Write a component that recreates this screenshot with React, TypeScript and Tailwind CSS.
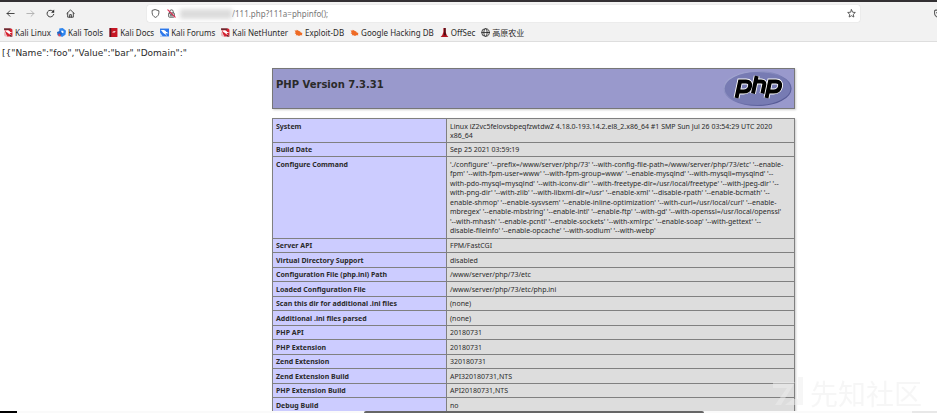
import React from "react";

type IconProps = { className?: string };

const stroke = {
  fill: "none",
  stroke: "currentColor",
  strokeWidth: 1.5,
  strokeLinecap: "round" as const,
  strokeLinejoin: "round" as const,
};

function BackIcon({ className }: IconProps) {
  return (
    <svg viewBox="0 0 16 16" className={className} {...stroke} aria-hidden="true">
      <path d="M14.500 8H2M7 3L2 8l5 5" />
    </svg>
  );
}

function ForwardIcon({ className }: IconProps) {
  return (
    <svg viewBox="0 0 16 16" className={className} {...stroke} aria-hidden="true">
      <path d="M1.500 8H14M9 3l5 5-5 5" />
    </svg>
  );
}

function ReloadIcon({ className }: IconProps) {
  return (
    <svg viewBox="0 0 16 16" className={className} {...stroke} strokeWidth={1.6} aria-hidden="true">
      <path d="M13.800 9.500A6 6 0 1 1 12 3.700" />
      <path d="M14.500 1v5.500H9z" fill="currentColor" stroke="none" />
    </svg>
  );
}

function HomeIcon({ className }: IconProps) {
  return (
    <svg viewBox="0 0 16 16" className={className} {...stroke} strokeWidth={1.5} aria-hidden="true">
      <path d="M1.500 8L8 1.500 14.500 8M3 7v7.500h10V7M6.500 14.500V10h3v4.500" />
    </svg>
  );
}

function ShieldIcon({ className }: IconProps) {
  return (
    <svg viewBox="0 0 16 16" className={className} {...stroke} strokeWidth={1.7} aria-hidden="true">
      <path d="M8 1.200l6 2v3.300c0 4-2.500 7-6 8.500-3.500-1.500-6-4.500-6-8.500V3.200z" />
    </svg>
  );
}

function InsecureIcon({ className }: IconProps) {
  return (
    <svg viewBox="0 0 16 16" className={className} {...stroke} strokeWidth={1.7} aria-hidden="true">
      <path d="M5 7V4.500a3 3 0 0 1 6 0V7" />
      <rect x="3" y="7" width="10" height="7.500" rx="1" />
      <path d="M6 9.500h4M6 12h4" />
      <path d="M1.500 1.500l13 13" stroke="#e22850" strokeWidth={2} />
    </svg>
  );
}

function StarIcon({ className }: IconProps) {
  return (
    <svg viewBox="0 0 16 16" className={className} {...stroke} aria-hidden="true">
      <path d="M8 1.300l2 4.400 4.800.5-3.600 3.200 1 4.900L8 11.900l-4.200 2.400 1-4.900L1.200 6.200 6 5.700z" />
    </svg>
  );
}

function PocketIcon({ className }: IconProps) {
  return (
    <svg viewBox="0 0 16 16" className={className} {...stroke} strokeWidth={1.8} aria-hidden="true">
      <path d="M3 2h10a2 2 0 0 1 2 2v3.500a7 7 0 0 1-14 0V4a2 2 0 0 1 2-2z" />
      <path d="M4.700 6.500L8 9.500l3.300-3" />
    </svg>
  );
}

function DragonIcon() {
  return (
    <svg viewBox="0 0 16 16" className="size-[9px] shrink-0" aria-hidden="true">
      <path d="M0 1h13l2 2v12H5z" fill="#d5202e" />
      <path d="M0 1h12l-2 2H0z" fill="#4a2a30" />
      <path d="M1 5c4-2 9-1 10 2 2 0 3 0 4 2-3-1-4 0-5 1 2 1 3 2 4 4-3-2-5-3-7-5-2-1-3-3-6-4z" fill="#fff" />
      <path d="M0 6l6 8-4 1-2-2z" fill="#e9b9bd" />
      <path d="M10 11l5 4h-4z" fill="#4a2a30" />
    </svg>
  );
}

function ForumsIcon() {
  return (
    <svg viewBox="0 0 16 16" className="size-[9px] shrink-0" aria-hidden="true">
      <rect x="0" y="1" width="16" height="14" fill="#2d78ea" />
      <path d="M1 4c5-1 9 0 10 3 2 0 3 1 4 3-3-1-4-1-5 0 1 1 2 2 3 5-3-4-5-4-7-6C4 7 4 5 1 4z" fill="#fff" />
      <path d="M0 8l5 7H0z" fill="#cfe0fa" />
    </svg>
  );
}

function ToolsIcon() {
  return (
    <svg viewBox="0 0 16 16" className="size-[9px] shrink-0" aria-hidden="true">
      <path d="M4 1l6-1 6 5-1 7-6 4-5-3z" fill="#2f86ee" />
      <path d="M0 7l6-2 3 5-3 5-5-2z" fill="#1c66cc" />
      <path d="M7 5l4 0 1 3-3 1z" fill="#fff" />
      <path d="M2 10l3 0 2 4-4 1z" fill="#e04a52" />
    </svg>
  );
}

function DocsIcon() {
  return (
    <svg viewBox="0 0 16 16" className="size-[9px] shrink-0" aria-hidden="true">
      <rect x="1" y="0" width="14" height="16" rx="1" fill="#c71624" />
      <path d="M1 0h3v16H1z" fill="#5b1420" />
      <path d="M6 7c2-2 4-1 6-1l-2 2H6z" fill="#fff" />
    </svg>
  );
}

function ExploitIcon() {
  return (
    <svg viewBox="0 0 16 16" className="size-[9px] shrink-0" aria-hidden="true">
      <path d="M1 4l3 1 1-2 3 2 3 1 1 2 3 1-1 2 1 2-4 0-2 1-3-1-3 0 1-2-3-2 2-1z" fill="#ee6a24" />
    </svg>
  );
}

function OffSecIcon() {
  return (
    <svg viewBox="0 0 16 16" className="size-[9px] shrink-0" aria-hidden="true">
      <path d="M6 0h4v7l2 6 3 3H1l3-3 2-6z" fill="#b0141f" />
      <path d="M7.500 0H10v8l1 5H7z" fill="#4e0c14" />
    </svg>
  );
}

function GlobeIcon() {
  return (
    <svg viewBox="0 0 16 16" className="size-[9px] shrink-0" {...stroke} aria-hidden="true">
      <circle cx="8" cy="8" r="6.800" />
      <ellipse cx="8" cy="8" rx="3" ry="6.800" />
      <path d="M1.500 8h13" />
    </svg>
  );
}

const bookmarks: { label: string; icon: React.ReactNode }[] = [
  { label: "Kali Linux", icon: <DragonIcon /> },
  { label: "Kali Tools", icon: <ToolsIcon /> },
  { label: "Kali Docs", icon: <DocsIcon /> },
  { label: "Kali Forums", icon: <ForumsIcon /> },
  { label: "Kali NetHunter", icon: <DragonIcon /> },
  { label: "Exploit-DB", icon: <ExploitIcon /> },
  { label: "Google Hacking DB", icon: <ExploitIcon /> },
  { label: "OffSec", icon: <OffSecIcon /> },
  { label: "高原农业", icon: <GlobeIcon /> },
];

const system = [
  "Linux iZ2vc5felovsbpeqfzwtdwZ 4.18.0-193.14.2.el8_2.x86_64 #1 SMP Sun Jul 26 03:54:29 UTC 2020",
  "x86_64",
];

const configure = [
  "'./configure' '--prefix=/www/server/php/73' '--with-config-file-path=/www/server/php/73/etc' '--enable-",
  "fpm' '--with-fpm-user=www' '--with-fpm-group=www' '--enable-mysqlnd' '--with-mysqli=mysqlnd' '--",
  "with-pdo-mysql=mysqlnd' '--with-iconv-dir' '--with-freetype-dir=/usr/local/freetype' '--with-jpeg-dir' '--",
  "with-png-dir' '--with-zlib' '--with-libxml-dir=/usr' '--enable-xml' '--disable-rpath' '--enable-bcmath' '--",
  "enable-shmop' '--enable-sysvsem' '--enable-inline-optimization' '--with-curl=/usr/local/curl' '--enable-",
  "mbregex' '--enable-mbstring' '--enable-intl' '--enable-ftp' '--with-gd' '--with-openssl=/usr/local/openssl'",
  "'--with-mhash' '--enable-pcntl' '--enable-sockets' '--with-xmlrpc' '--enable-soap' '--with-gettext' '--",
  "disable-fileinfo' '--enable-opcache' '--with-sodium' '--with-webp'",
];

const rows: [string, string][] = [
  ["Server API", "FPM/FastCGI"],
  ["Virtual Directory Support", "disabled"],
  ["Configuration File (php.ini) Path", "/www/server/php/73/etc"],
  ["Loaded Configuration File", "/www/server/php/73/etc/php.ini"],
  ["Scan this dir for additional .ini files", "(none)"],
  ["Additional .ini files parsed", "(none)"],
  ["PHP API", "20180731"],
  ["PHP Extension", "20180731"],
  ["Zend Extension", "320180731"],
  ["Zend Extension Build", "API320180731,NTS"],
  ["PHP Extension Build", "API20180731,NTS"],
  ["Debug Build", "no"],
];

function InfoRow({ label, lines, height }: { label: string; lines: string[]; height: string }) {
  const multi = lines.length > 1;
  const align = multi ? "pt-[3px] align-top leading-[9px]" : "pt-[1px] align-middle leading-[12px]";
  return (
    <tr className={height}>
      <th scope="row" className={`border border-[#808080] bg-[#ccccff] px-[3px] text-left font-bold ${align}`}>
        {label}
      </th>
      <td className={`border border-[#808080] bg-[#dddddd] px-[3px] whitespace-nowrap ${align}`}>
        {multi
          ? lines.map((line) => (
              <span key={line} className="block odd:h-[9px] even:h-[10px]">
                {line}
              </span>
            ))
          : lines[0]}
      </td>
    </tr>
  );
}

function PhpLogo() {
  return (
    <svg viewBox="0 0 72 39" className="h-[39px] w-[72px]" role="img" aria-label="PHP logo">
      <defs>
        <linearGradient id="rim" x1="0" y1="0" x2="1" y2="1">
          <stop offset="0" stopColor="#b4b7dc" />
          <stop offset="0.500" stopColor="#777bb3" />
          <stop offset="1" stopColor="#484c89" />
        </linearGradient>
      </defs>
      <ellipse cx="35.500" cy="19.500" rx="33.500" ry="17" fill="#777bb3" stroke="url(#rim)" strokeWidth="1.200" />
      <g fill="none" strokeLinejoin="miter">
        {["#fff", "#000"].map((color) => (
          <g key={color} stroke={color} strokeWidth={color === "#fff" ? 5.8 : 4}>
            <path d="M14.500 29L18 12.500H24Q29 12.500 28 17.500 27 22.500 21.500 22.500H17" />
            <path d="M31 24.500L34.700 7M33.700 12.500H39Q43 12.500 42.200 16L40.400 24.500" />
            <path d="M44.500 29L48 12.500H54Q59 12.500 58 17.500 57 22.500 51.500 22.500H47" />
          </g>
        ))}
      </g>
    </svg>
  );
}

export default function App() {
  return (
    <div className="relative flex h-screen flex-col overflow-hidden bg-white font-['DejaVu_Sans',sans-serif] text-[#2a2a2a]">
      <header className="shrink-0 border-t-2 border-b border-t-[#333033] border-b-[#dedede] bg-[#f2f2f2] font-['Noto_Sans','Noto_Sans_CJK_SC',sans-serif]">
        <div className="flex h-[22px] items-center pt-[1px]">
          <nav className="flex w-[147px] shrink-0 items-center gap-[11px] pl-[6px]">
            <button aria-label="Back"><BackIcon className="size-[9px]" /></button>
            <button aria-label="Forward" className="text-[#aaa]"><ForwardIcon className="size-[9px]" /></button>
            <button aria-label="Reload"><ReloadIcon className="size-[9px]" /></button>
            <button aria-label="Home"><HomeIcon className="size-[9px]" /></button>
          </nav>
          <div className="mr-[74px] flex h-[17px] min-w-0 flex-1 items-center rounded-[2px] bg-white px-[4px] shadow-[0_0_1px_#bbb]">
            <ShieldIcon className="size-[9px] shrink-0 text-[#555]" />
            <InsecureIcon className="ml-[7px] size-[9px] shrink-0 text-[#555]" />
            <span className="ml-[4px] h-[10px] w-[52px] shrink-0 bg-[#dcdcdc] blur-[2px]" />
            <input
              aria-label="Address"
              defaultValue="/111.php?111a=phpinfo();"
              className="h-[15px] min-w-0 flex-1 bg-transparent text-[8px] leading-[15px] text-[#777] outline-none"
            />
            <button aria-label="Bookmark this page" className="text-[#444]"><StarIcon className="size-[9px]" /></button>
          </div>
          <button aria-label="Save to Pocket" className="-mr-[6px] shrink-0 text-[#555]"><PocketIcon className="size-[9px]" /></button>
        </div>
        <nav className="flex h-[17px] items-center gap-[6px] pl-[4px] text-[8px] leading-[12px]">
          {bookmarks.map(({ label, icon }) => (
            <a key={label} href="#" className="flex items-center gap-[2px] whitespace-nowrap">
              {icon}
              {label}
            </a>
          ))}
        </nav>
      </header>

      <main className="min-h-0 flex-1 overflow-hidden">
        <p className="pt-[5px] pl-[2px] text-[9px] leading-[12px]">{'[{"Name":"foo","Value":"bar","Domain":"'}</p>
        <div className="mt-[9px] ml-[272px] w-[523px]">
          <div className="flex h-[41px] items-start justify-between border border-[#777] bg-[#9999cc] pl-[3px] shadow-[1px_1px_2px_#ccc]">
            <h1 className="pt-[9px] text-[10px] leading-[14px] font-bold">PHP Version 7.3.31</h1>
            <PhpLogo />
          </div>
          <table className="mt-[9px] w-full table-fixed border-collapse font-['Noto_Sans',sans-serif] text-[7px] shadow-[1px_1px_2px_#ccc]">
            <colgroup>
              <col className="w-[174px]" />
              <col />
            </colgroup>
            <tbody>
              <InfoRow label="System" lines={system} height="h-[24px]" />
              <InfoRow label="Build Date" lines={["Sep 25 2021 03:59:19"]} height="h-[14px]" />
              <InfoRow label="Configure Command" lines={configure} height="h-[82px]" />
              {rows.map(([label, value]) => (
                <InfoRow key={label} label={label} lines={[value]} height="odd:h-[15px] even:h-[14px]" />
              ))}
            </tbody>
          </table>
        </div>
      </main>

      <footer className="flex h-[2px] shrink-0 bg-[#fafafa]">
        <div className="w-[17px] bg-black" />
        <div className="ml-[347px] w-[340px] rounded-t-[2px] bg-[#666]" />
        <div className="ml-auto w-[25px] bg-[#e8e8e8]" />
      </footer>

      <div className="pointer-events-none absolute right-[15px] bottom-[4px] flex items-center gap-[7px] text-[#eeeeee] opacity-50">
        <svg viewBox="0 0 30 32" className="h-[32px] w-[30px]" fill="currentColor" aria-hidden="true">
          <path d="M0 5h22L8 28H2L14 11H0zM25 0h5v28H12l8-6h5z" />
        </svg>
        <span className="font-['Noto_Sans_CJK_SC',sans-serif] text-[28px] leading-[32px]">先知社区</span>
      </div>
    </div>
  );
}
